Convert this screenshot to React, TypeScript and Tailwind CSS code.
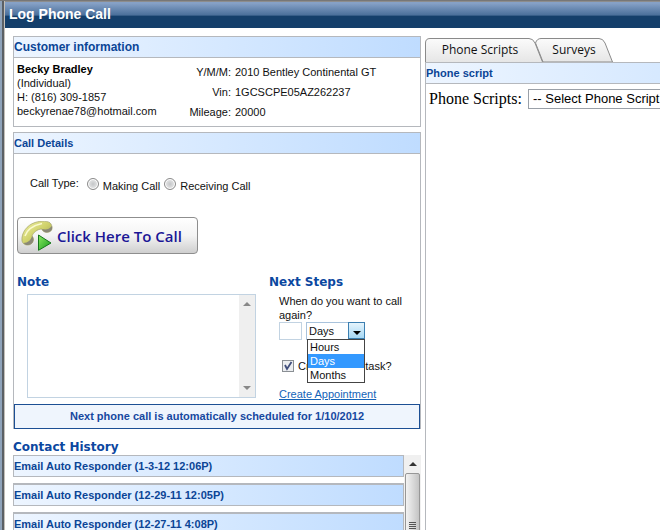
import type { ReactNode } from "react";

const history = [
  "Email Auto Responder (1-3-12 12:06P)",
  "Email Auto Responder (12-29-11 12:05P)",
  "Email Auto Responder (12-27-11 4:08P)",
];

const vehicle = [
  ["Y/M/M:", "2010 Bentley Continental GT"],
  ["Vin:", "1GCSCPE05AZ262237"],
  ["Mileage:", "20000"],
];

function Bar({ children, size = "text-[11px]" }: { children: ReactNode; size?: string }) {
  return (
    <h2
      className={`h-5 bg-linear-to-r from-[#edf5ff] to-[#bfdcff] leading-5 font-bold whitespace-nowrap text-[#0b4596] ${size}`}
    >
      {children}
    </h2>
  );
}

function Heading({ children }: { children: ReactNode }) {
  return (
    <h2 className="font-[DejaVu_Sans,Verdana,sans-serif] text-[12px] leading-4 font-bold whitespace-nowrap text-[#0b47a0]">
      {children}
    </h2>
  );
}

function Arrow({ up = false }: { up?: boolean }) {
  return (
    <svg viewBox="0 0 8 4" className="h-1 w-2 flex-none" aria-hidden="true">
      <path d={up ? "M0 4L4 0L8 4Z" : "M0 0L4 4L8 0Z"} fill="currentColor" />
    </svg>
  );
}

function PhoneIcon() {
  return (
    <svg viewBox="0 0 32 30" className="h-[30px] w-8 flex-none" aria-hidden="true">
      <defs>
        <linearGradient id="handset" x1="0" y1="0" x2="1" y2="1">
          <stop offset="0" stopColor="#f1f2a6" />
          <stop offset="0.5" stopColor="#cfd16a" />
          <stop offset="1" stopColor="#8c8d58" />
        </linearGradient>
        <linearGradient id="play" x1="0" y1="0" x2="1" y2="1">
          <stop offset="0" stopColor="#8bea62" />
          <stop offset="1" stopColor="#159a1c" />
        </linearGradient>
      </defs>
      <path
        d="M1 20C0 12 6 4 14 1.500C20 -0.500 28 -0.500 30 3C32 7 31 10 28 11C24 12 21 10 21 8C16 8 12 12 11 15C13 17 13 21 10 23C7 25 2 24 1 20Z"
        fill="url(#handset)"
        stroke="#a3a468"
        strokeWidth="0.7"
      />
      <path d="M21 8C22 11 25 12 28 11C31 10 31.500 7 31 5C28 8.500 25 9 21 8Z" fill="#8a8876" />
      <path d="M11 15C13 17 13 21 10 23C7 25 4 24 2.500 22C7 22 10 19 11 15Z" fill="#8a8876" />
      <path d="M4 15C6 9 12 4.500 21 2.500" fill="none" stroke="#fafad0" strokeWidth="1.500" />
      <path d="M17.500 14L30 22L17.500 29.300Z" fill="url(#play)" stroke="#16761b" strokeWidth="1" strokeLinejoin="round" />
    </svg>
  );
}

function Tab({ label, path, box, className }: { label: string; path: string; box: string; className: string }) {
  return (
    <button
      type="button"
      className={`relative h-6 flex-none font-[Open_Sans,Noto_Sans,sans-serif] text-[12px] leading-[22px] whitespace-nowrap text-[#111] ${className}`}
    >
      <svg viewBox={box} className="absolute inset-0 h-full w-full" aria-hidden="true">
        <defs>
          <linearGradient id="tab" x1="0" y1="0" x2="0" y2="1">
            <stop offset="0" stopColor="#fbfbfb" />
            <stop offset="1" stopColor="#e6e6e6" />
          </linearGradient>
        </defs>
        <path d={path} fill="url(#tab)" stroke="#8a8a8a" />
      </svg>
      <span className="relative">{label}</span>
    </button>
  );
}

export default function App() {
  return (
    <div className="flex h-screen flex-col overflow-hidden border-t border-[#777] bg-white font-[Liberation_Sans,Arial,sans-serif] text-[11px] leading-[14px] text-[#111]">
      <div className="flex min-h-0 flex-1">
        <div className="w-0.5 flex-none bg-[#8fa3ba]" />
        <div className="w-0.5 flex-none bg-[#5b6065]" />
        <div className="w-px flex-none bg-[#c3bfb8]" />
        <div className="flex min-w-0 flex-1 flex-col">
          <header className="h-[27px] flex-none border-t border-[#8d8d8d] bg-linear-to-b from-[#86a1c6] from-5% via-[#4b709b] via-50% to-[#143f6b] to-55% px-1 text-[14px] leading-[25px] font-bold text-white">
            <h1>Log Phone Call</h1>
          </header>
          <main className="grid min-h-0 flex-1 grid-cols-[408fr_235fr] gap-1 pt-2 pl-2">
            <div className="flex min-h-0 min-w-0 flex-col">
              <section className="border border-[#b5b8bd]">
                <Bar size="text-[12px]">Customer information</Bar>
                <div className="flex h-[69px] border-t border-[#b5b8bd] pt-1 pl-[3px]">
                  <address className="w-[158px] not-italic">
                    <b className="text-black">Becky Bradley</b>
                    <br />
                    (Individual)
                    <br />
                    H: (816) 309-1857
                    <br />
                    beckyrenae78@hotmail.com
                  </address>
                  <dl className="grid flex-1 content-start grid-cols-[56px_1fr] gap-x-1 leading-5">
                    {vehicle.map(([name, value]) => (
                      <div key={name} className="contents">
                        <dt className="text-right">{name}</dt>
                        <dd>{value}</dd>
                      </div>
                    ))}
                  </dl>
                </div>
              </section>

              <section className="mt-[5px] border border-b-0 border-[#b5b8bd]">
                <Bar>Call Details</Bar>
                <div className="border-t border-[#b5b8bd]">
                  <div role="radiogroup" aria-labelledby="call-type" className="flex items-center pt-[18px] pl-4">
                    <span id="call-type" className="mr-2">
                      Call Type:
                    </span>
                    {["Making Call", "Receiving Call"].map((name) => (
                      <label key={name} className="mr-1 flex items-center gap-1 pt-1.5">
                        <input
                          type="radio"
                          name="call-type"
                          className="mb-1 size-3 appearance-none rounded-full border border-[#8a8a8a] bg-radial from-[#c4c6c8] to-[#f6f6f6] shadow-[inset_0_0_0_1px_#fff]"
                        />
                        {name}
                      </label>
                    ))}
                  </div>
                  <button
                    type="button"
                    className="mt-[23px] ml-[3px] flex h-[37px] w-[181px] items-center gap-1 rounded border border-[#8e8e8e] bg-linear-to-b from-white via-[#f4f4f4] to-[#cfcfcf] pl-[3px] font-[Open_Sans,sans-serif] text-[15px] font-semibold whitespace-nowrap text-[#1c1796]"
                  >
                    <PhoneIcon />
                    Click Here To Call
                  </button>
                  <div className="mt-5 flex">
                    <div className="w-[252px] pl-[3px]">
                      <Heading>Note</Heading>
                      <div className="mt-1 ml-2.5 flex h-[104px] w-[229px] border border-[#c2d3e2]">
                        <textarea aria-label="Note" className="min-w-0 flex-1 resize-none outline-none" />
                        <div className="flex w-4 flex-col items-center justify-between bg-[#efefef] py-[7px] text-[#888]">
                          <Arrow up />
                          <Arrow />
                        </div>
                      </div>
                    </div>
                    <div className="pl-[3px]">
                      <Heading>Next Steps</Heading>
                      <div className="pt-1 pl-2.5">
                        <label htmlFor="again" className="block w-[130px]">
                          When do you want to call again?
                        </label>
                        <div className="flex gap-1">
                          <input id="again" className="h-[18px] w-[23px] border border-[#c2d3e2]" />
                          <div className="relative">
                            <select
                              aria-label="Unit"
                              defaultValue="Days"
                              className="block h-[18px] w-[59px] appearance-none border border-[#a9c3dc] pl-0.5 leading-4"
                            >
                              <option>Hours</option>
                              <option>Days</option>
                              <option>Months</option>
                            </select>
                            <span className="pointer-events-none absolute top-0 right-0 flex h-[17px] w-[17px] items-center justify-center border border-[#3c7fb1] bg-linear-to-b from-[#e5f4fc] to-[#a6d8f4] pt-1 text-black">
                              <Arrow />
                            </span>
                            <ul className="absolute top-[17px] left-px z-10 w-[58px] border border-[#444] bg-white">
                              <li className="pl-0.5">Hours</li>
                              <li className="bg-[#3399ff] pl-0.5 text-white">Days</li>
                              <li className="pl-0.5">Months</li>
                            </ul>
                          </div>
                        </div>
                        <label className="mt-[19px] flex items-center gap-1 pl-[3px] whitespace-nowrap">
                          <span className="relative size-3 flex-none">
                            <input
                              type="checkbox"
                              defaultChecked
                              className="block size-3 appearance-none border border-[#8a8f94] bg-[#eceef0]"
                            />
                            <svg viewBox="0 0 12 12" className="pointer-events-none absolute inset-0 size-3" aria-hidden="true">
                              <path d="M3 5L5 9L9.500 2" fill="none" stroke="#404e7c" strokeWidth="1.800" />
                            </svg>
                          </span>
                          Create follow task?
                        </label>
                        <a href="#appointment" className="mt-3.5 inline-block text-[#1463b8] underline">
                          Create Appointment
                        </a>
                      </div>
                    </div>
                  </div>
                  <p className="mt-[3px] border border-[#1c4f94] bg-[#eff5fd] text-center leading-[23px] font-bold text-[#1648a0]">
                    Next phone call is automatically scheduled for 1/10/2012
                  </p>
                </div>
              </section>

              <div className="pt-2.5">
                <Heading>Contact History</Heading>
              </div>
              <div className="flex min-h-0 flex-1 overflow-hidden">
                <ul className="flex flex-1 flex-col gap-[6px]">
                  {history.map((entry) => (
                    <li key={entry} className="border border-[#b5b8bd] not-first:border-t-2">
                      <Bar>{entry}</Bar>
                    </li>
                  ))}
                </ul>
                <div className="flex w-[17px] flex-none flex-col items-center bg-[#f0f0f0] pt-[7px] text-[#333]">
                  <Arrow up />
                  <div className="mt-[7px] flex h-[110px] w-[15px] flex-none flex-col items-center gap-px rounded-xs border border-[#979797] bg-linear-to-r from-[#f3f3f3] to-[#c4c4c4] pt-12">
                    <i className="h-px w-[7px] bg-[#555]" />
                    <i className="h-px w-[7px] bg-[#555]" />
                    <i className="h-px w-[7px] bg-[#555]" />
                    <i className="h-px w-[7px] bg-[#555]" />
                  </div>
                </div>
              </div>
            </div>

            <div className="flex min-w-0 flex-col overflow-hidden pt-0.5">
              <nav className="flex">
                <Tab
                  label="Phone Scripts"
                  box="0 0 118 24"
                  path="M0.500 24V5Q0.500 0.500 5 0.500H104Q108 0.500 110 5L117.500 24"
                  className="z-10 w-[118px] pr-2 text-center"
                />
                <Tab
                  label="Surveys"
                  box="0 0 78 24"
                  path="M0.500 5Q2 0.500 6 0.500H64Q68 0.500 70 5L77.500 24H8Z"
                  className="-ml-2 w-[78px] text-center"
                />
              </nav>
              <section className="flex-1 border-t border-l border-[#b5b8bd]">
                <div className="w-[480px] border-b border-[#b5b8bd]">
                  <Bar>Phone script</Bar>
                </div>
                <div className="flex items-center pt-[5px] pl-[3px]">
                  <label htmlFor="script" className="w-[99px] flex-none font-[Liberation_Serif,serif] text-[16px] leading-5 text-black">
                    Phone Scripts:
                  </label>
                  <select
                    id="script"
                    className="h-5 w-[160px] flex-none appearance-none border border-[#9aa0a8] pl-1 text-[13px] leading-[18px] text-black"
                  >
                    <option>-- Select Phone Script --</option>
                  </select>
                </div>
              </section>
            </div>
          </main>
        </div>
      </div>
    </div>
  );
}
